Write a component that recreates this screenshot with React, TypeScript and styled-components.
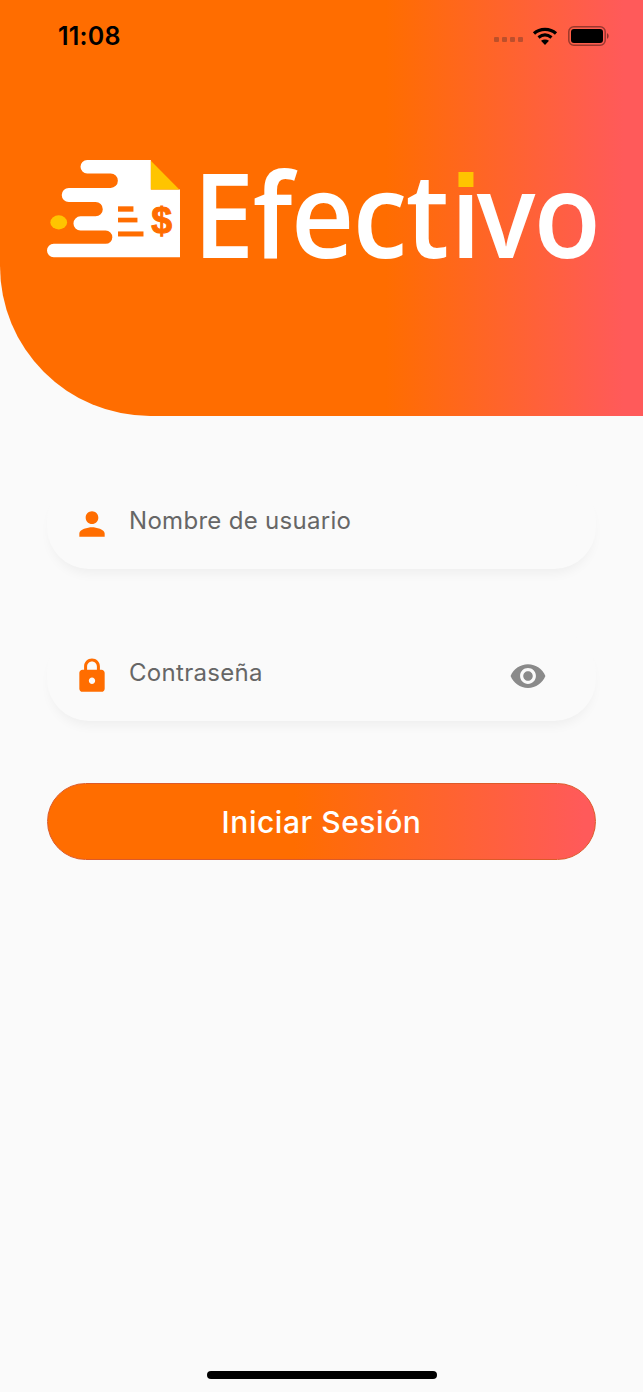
import React from 'react';
import styled, { createGlobalStyle } from 'styled-components';
import { MdPerson, MdLock, MdVisibility } from 'react-icons/md';

const GlobalStyle = createGlobalStyle`
  html, body {
    margin: 0;
    padding: 0;
    background: #fafafa;
  }
  * {
    box-sizing: border-box;
  }
`

const Page = styled.div`
  width: 643px;
  height: 1392px;
  display: flex;
  flex-direction: column;
  background: #fafafa;
  font-family: Inter, "Liberation Sans", sans-serif;
  overflow: hidden;
`

const Hero = styled.header`
  height: 416px;
  padding-bottom: 158px;
  display: flex;
  flex-direction: column;
  border-bottom-left-radius: 150px;
  background: linear-gradient(90deg, #ff6d00 0%, #ff6d00 60%, #ff5a5a 97%);
`

const StatusBar = styled.div`
  height: 70px;
  padding: 1px 33px 0 58px;
  display: flex;
  align-items: center;
  color: #000;
`

const Clock = styled.span`
  flex: 1;
  font-size: 25px;
  font-weight: 600;
  letter-spacing: 0.2px;
`

const SignalDots = styled.div`
  display: flex;
  gap: 3px;
  margin: 8px 9px 0 0;
`

const SignalDot = styled.i`
  width: 5px;
  height: 5px;
  border-radius: 1px;
  background: rgba(90, 50, 40, 0.4);
`

const WifiIcon = styled.svg`
  width: 26px;
  height: 18px;
  margin-right: 10px;
`

const BatteryIcon = styled.svg`
  width: 42px;
  height: 20px;
`

const Brand = styled.div`
  margin-top: auto;
  padding-left: 47px;
  display: flex;
  align-items: flex-end;
  gap: 12px;
`

const LogoMark = styled.svg`
  width: 134px;
  height: 98px;
  flex: none;
`

/* the logotype is narrower than any installed face, so it is squeezed a little */
const Wordmark = styled.span`
  display: block;
  height: 98px;
  font-family: "Open Sans", "Liberation Sans", sans-serif;
  font-size: 117px;
  line-height: 105px;
  font-weight: 600;
  letter-spacing: -1.6px;
  white-space: nowrap;
  color: #fff;
  transform: scaleX(0.938);
  transform-origin: left center;
`

const ILetter = styled.span`
  position: relative;
  display: inline-block;
  margin: 0 -3px 0 3px;
`

/* the logo replaces the round dot of the i with a yellow square */
const IStem = styled.span`
  display: inline-block;
  clip-path: inset(35px -10px 0 -10px);
`

const IDot = styled.i`
  position: absolute;
  left: 9px;
  top: 12px;
  width: 16px;
  height: 15px;
  background: #ffc400;
`

const Form = styled.main`
  padding: 63px 47px 0;
  display: flex;
  flex-direction: column;
  gap: 62px;
`

const Field = styled.div`
  height: 90px;
  padding: 0 49px 0 26px;
  display: flex;
  align-items: center;
  gap: 18px;
  border-radius: 42px;
  background: #fafafa;
  box-shadow: 0 8px 12px -4px rgba(0, 0, 0, 0.05);
  color: #ff6d00;
`

const FieldLabel = styled.span`
  flex: 1;
  padding-bottom: 8px;
  font-size: 24px;
  letter-spacing: 0.3px;
  color: #666;
`

const EyeButton = styled.span`
  display: flex;
  color: #8a8a8a;
`

const SubmitButton = styled.button`
  height: 77px;
  border: 1px solid #dc5a2a;
  border-radius: 39px;
  background: linear-gradient(90deg, #ff6d00 0%, #ff6d00 45%, #ff5a5a 98%);
  font-family: Inter, "Liberation Sans", sans-serif;
  font-size: 30px;
  font-weight: 500;
  letter-spacing: 0.55px;
  color: #fff;
`

const HomeIndicator = styled.div`
  width: 230px;
  height: 8px;
  margin: auto auto 13px;
  border-radius: 4px;
  background: #000;
`

const Logo = () => (
  <LogoMark viewBox="50 60 400 292">
    <path
      fill="#fff"
      d="M170 60H360V148H447V350H70a20 20 0 0 1 0-40H225a20 20 0 0 0 0-40H150a20 20 0 0 1 0-42H195a21 21 0 0 0 0-43H115a21 21 0 0 1 0-42H240a21 21 0 0 0 0-43H170a20 20 0 0 1 0-40Z"
    />
    <path fill="#ffc400" d="M360 62L445 148H360Z" />
    <ellipse cx="85" cy="246" rx="25" ry="21" fill="#ffc400" />
    <rect x="262" y="198" width="46" height="16" fill="#ff6d00" />
    <rect x="262" y="232" width="58" height="14" fill="#ff6d00" />
    <rect x="262" y="273" width="76" height="15" fill="#ff6d00" />
    <text x="392" y="279" textAnchor="middle" fontFamily="Liberation Sans" fontWeight="700" fontSize="112" stroke="#ff6d00" strokeWidth="3" fill="#ff6d00">$</text>
  </LogoMark>
)

export default function App() {
  return (
    <Page>
      <GlobalStyle />
      <Hero>
        <StatusBar>
          <Clock>11:08</Clock>
          <SignalDots>
            <SignalDot />
            <SignalDot />
            <SignalDot />
            <SignalDot />
          </SignalDots>
          <WifiIcon viewBox="0 0 26 18" fill="none" stroke="#000" strokeWidth="3.2">
            <path d="M2 6.5C8 1 18 1 24 6.5" />
            <path d="M6.5 10.5C10.5 7.3 15.5 7.3 19.5 10.5" />
            <path d="M13 18L9 13.8C11.4 12.2 14.6 12.2 17 13.8Z" fill="#000" stroke="none" />
          </WifiIcon>
          <BatteryIcon viewBox="0 0 42 20">
            <rect x="0.8" y="0.8" width="36.4" height="18.4" rx="5" fill="none" stroke="#000" strokeOpacity="0.4" strokeWidth="1.5" />
            <rect x="3" y="3" width="32" height="14" rx="3" fill="#000" />
            <path d="M39 7a3.5 3.5 0 0 1 0 6Z" fill="#000" fillOpacity="0.45" />
          </BatteryIcon>
        </StatusBar>
        <Brand>
          <Logo />
          <Wordmark>
            Efect
            <ILetter>
              <IStem>i</IStem>
              <IDot />
            </ILetter>
            vo
          </Wordmark>
        </Brand>
      </Hero>
      <Form>
        <Field>
          <MdPerson size={38} />
          <FieldLabel>Nombre de usuario</FieldLabel>
        </Field>
        <Field>
          <MdLock size={38} />
          <FieldLabel>Contraseña</FieldLabel>
          <EyeButton>
            <MdVisibility size={38} />
          </EyeButton>
        </Field>
        <SubmitButton type="button">Iniciar Sesión</SubmitButton>
      </Form>
      <HomeIndicator />
    </Page>
  )
}
